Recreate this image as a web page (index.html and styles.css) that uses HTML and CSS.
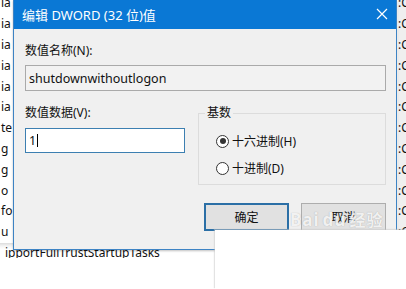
FILE: index.html
```html
<!DOCTYPE html>
<html>
<head>
<meta charset="utf-8">
<link rel="stylesheet" href="styles.css">
</head>
<body>
<div class="screen">
  <div class="list">
    <div class="row"><span class="name">ia</span><span class="data">:C</span></div>
    <div class="row"><span class="name">ia</span><span class="data">:C</span></div>
    <div class="row"><span class="name">ia</span><span class="data">:C</span></div>
    <div class="row"><span class="name">ia</span><span class="data">:C</span></div>
    <div class="row"><span class="name">ia</span><span class="data">:C</span></div>
    <div class="row"><span class="name">ia</span><span class="data">:C</span></div>
    <div class="row"><span class="name">te</span><span class="data">:C</span></div>
    <div class="row"><span class="name">g</span><span class="data">:C</span></div>
    <div class="row"><span class="name">g</span><span class="data">:C</span></div>
    <div class="row"><span class="name">o</span><span class="data">:C</span></div>
    <div class="row"><span class="name">fo</span><span class="data">:C</span></div>
    <div class="row"><span class="name">u</span><span class="data">:C</span></div>
    <div class="row last"><span class="name wide">ipportFullTrustStartupTasks</span><span class="data">:C</span></div>
  </div>

  <div class="dialog">
    <div class="titlebar">
      <span class="title">编辑 DWORD (32 位)值</span>
      <svg class="close" width="12" height="12" viewBox="0 0 12 12"><path d="M1 1 L11 11 M11 1 L1 11" stroke="#ffffff" stroke-width="1.2" fill="none"/></svg>
    </div>
    <div class="body">
      <div class="label">数值名称(N):</div>
      <div class="field readonly">shutdownwithoutlogon</div>
      <div class="row2">
        <div class="col">
          <div class="label">数值数据(V):</div>
          <div class="field focused">1<span class="caret"></span></div>
        </div>
        <fieldset class="group">
          <legend>基数</legend>
          <div class="radio"><span class="circle checked"></span><span>十六进制(H)</span></div>
          <div class="radio"><span class="circle"></span><span>十进制(D)</span></div>
        </fieldset>
      </div>
      <div class="buttons">
        <div class="btn default">确定</div>
        <div class="btn">取消</div>
      </div>
    </div>
  </div>

  <div class="wm"><span class="wm-bai">Bai</span><span class="wm-du">du</span><span class="wm-jy">经验</span></div>
  <div class="blank"></div>
</div>
</body>
</html>
```
FILE: styles.css
```css
html, body {
  margin: 0;
  padding: 0;
  background: #ffffff;
}
.screen {
  position: relative;
  width: 406px;
  height: 289px;
  overflow: hidden;
  background: #ffffff;
  font-family: "Noto Sans", "Noto Sans CJK SC", sans-serif;
}
.list {
  height: 258px;
  overflow: hidden;
  display: flex;
  flex-direction: column;
  font-size: 12px;
  color: #111;
}
.row {
  flex: 0 0 20.8px;
  display: flex;
  align-items: center;
  line-height: 16px;
}
.row:first-child {
  margin-top: -7px;
}
.name {
  flex: 1;
  padding-left: 1px;
  white-space: nowrap;
  overflow: hidden;
}
.name.wide {
  padding-left: 5px;
}
.data {
  width: 8px;
  align-self: stretch;
  display: flex;
  align-items: center;
  background: #efefef;
  white-space: nowrap;
  overflow: hidden;
}
.row.last {
  background: linear-gradient(#dcdcdc 0, #f4f4f4 3px, #ffffff 6px);
}

.dialog {
  position: absolute;
  left: 13px;
  top: 0;
  width: 384px;
  height: 250px;
  box-sizing: border-box;
  border: 1px solid #3d83c4;
  border-top: none;
  background: #f0f0f0;
  display: flex;
  flex-direction: column;
  box-shadow: 0 1px 2px rgba(0,0,0,0.25);
}
.titlebar {
  height: 29px;
  flex: 0 0 29px;
  background: #0a78d5;
  display: flex;
  align-items: center;
  justify-content: space-between;
  padding: 0 8px 1px 8px;
  box-sizing: border-box;
  color: #ffffff;
  font-size: 13px;
}
.body {
  padding: 14px 10px 0 11px;
  font-size: 12px;
  color: #111;
}
.label {
  line-height: 16px;
  height: 16px;
}
.field {
  margin-top: 6px;
  height: 26px;
  box-sizing: border-box;
  border: 1px solid #aaaaaa;
  padding: 0 3px;
  display: flex;
  align-items: center;
  font-size: 12.5px;
  background: #f2f2f2;
}
.field.focused {
  margin-top: 7px;
  height: 25px;
  border-color: #3c7fb1;
  background: #ffffff;
}
.caret {
  display: inline-block;
  width: 0;
  height: 13px;
  border-left: 1px solid #000;
  margin-left: 1px;
}
.row2 {
  margin-top: 14px;
  display: grid;
  grid-template-columns: 160px 188px;
  column-gap: 13px;
}
.group {
  margin: 0;
  padding: 12px 0 0 0;
  border: 1px solid #dcdcdc;
  height: 80px;
  box-sizing: border-box;
  min-width: 0;
}
.group legend {
  padding: 0 2px;
  margin-left: 6px;
  line-height: 16px;
  font-size: 12px;
}
.radio {
  display: flex;
  align-items: center;
  height: 16px;
  margin-bottom: 11px;
  margin-left: 17px;
  gap: 3px;
}
.circle {
  width: 11px;
  height: 11px;
  border: 1px solid #333;
  border-radius: 50%;
  background: #ffffff;
  display: flex;
  align-items: center;
  justify-content: center;
}
.circle.checked::after {
  content: "";
  width: 6px;
  height: 6px;
  border-radius: 50%;
  background: #333;
}
.buttons {
  margin-top: 18px;
  display: flex;
  justify-content: flex-end;
  gap: 12px;
}
.btn {
  width: 85px;
  height: 28px;
  box-sizing: border-box;
  border: 1px solid #adadad;
  background: #e1e1e1;
  display: flex;
  align-items: center;
  justify-content: center;
  font-size: 12px;
}
.btn.default {
  border: 2px solid #2b6fa6;
}

.wm {
  position: absolute;
  left: 290px;
  top: 208px;
  font-size: 17px;
  font-weight: bold;
  color: rgba(255,255,255,0.85);
  text-shadow: 0 0 1px rgba(120,120,120,0.6);
  letter-spacing: 1px;
  line-height: 24px;
}
.wm-du {
  margin-left: 3px;
}
.wm-jy {
  margin-left: 3px;
  font-size: 16px;
}
.blank {
  position: absolute;
  left: 215px;
  top: 230px;
  right: 0;
  bottom: 0;
  background: #ffffff;
  box-shadow: -1px -1px 1px rgba(200,200,200,0.5);
}
```
